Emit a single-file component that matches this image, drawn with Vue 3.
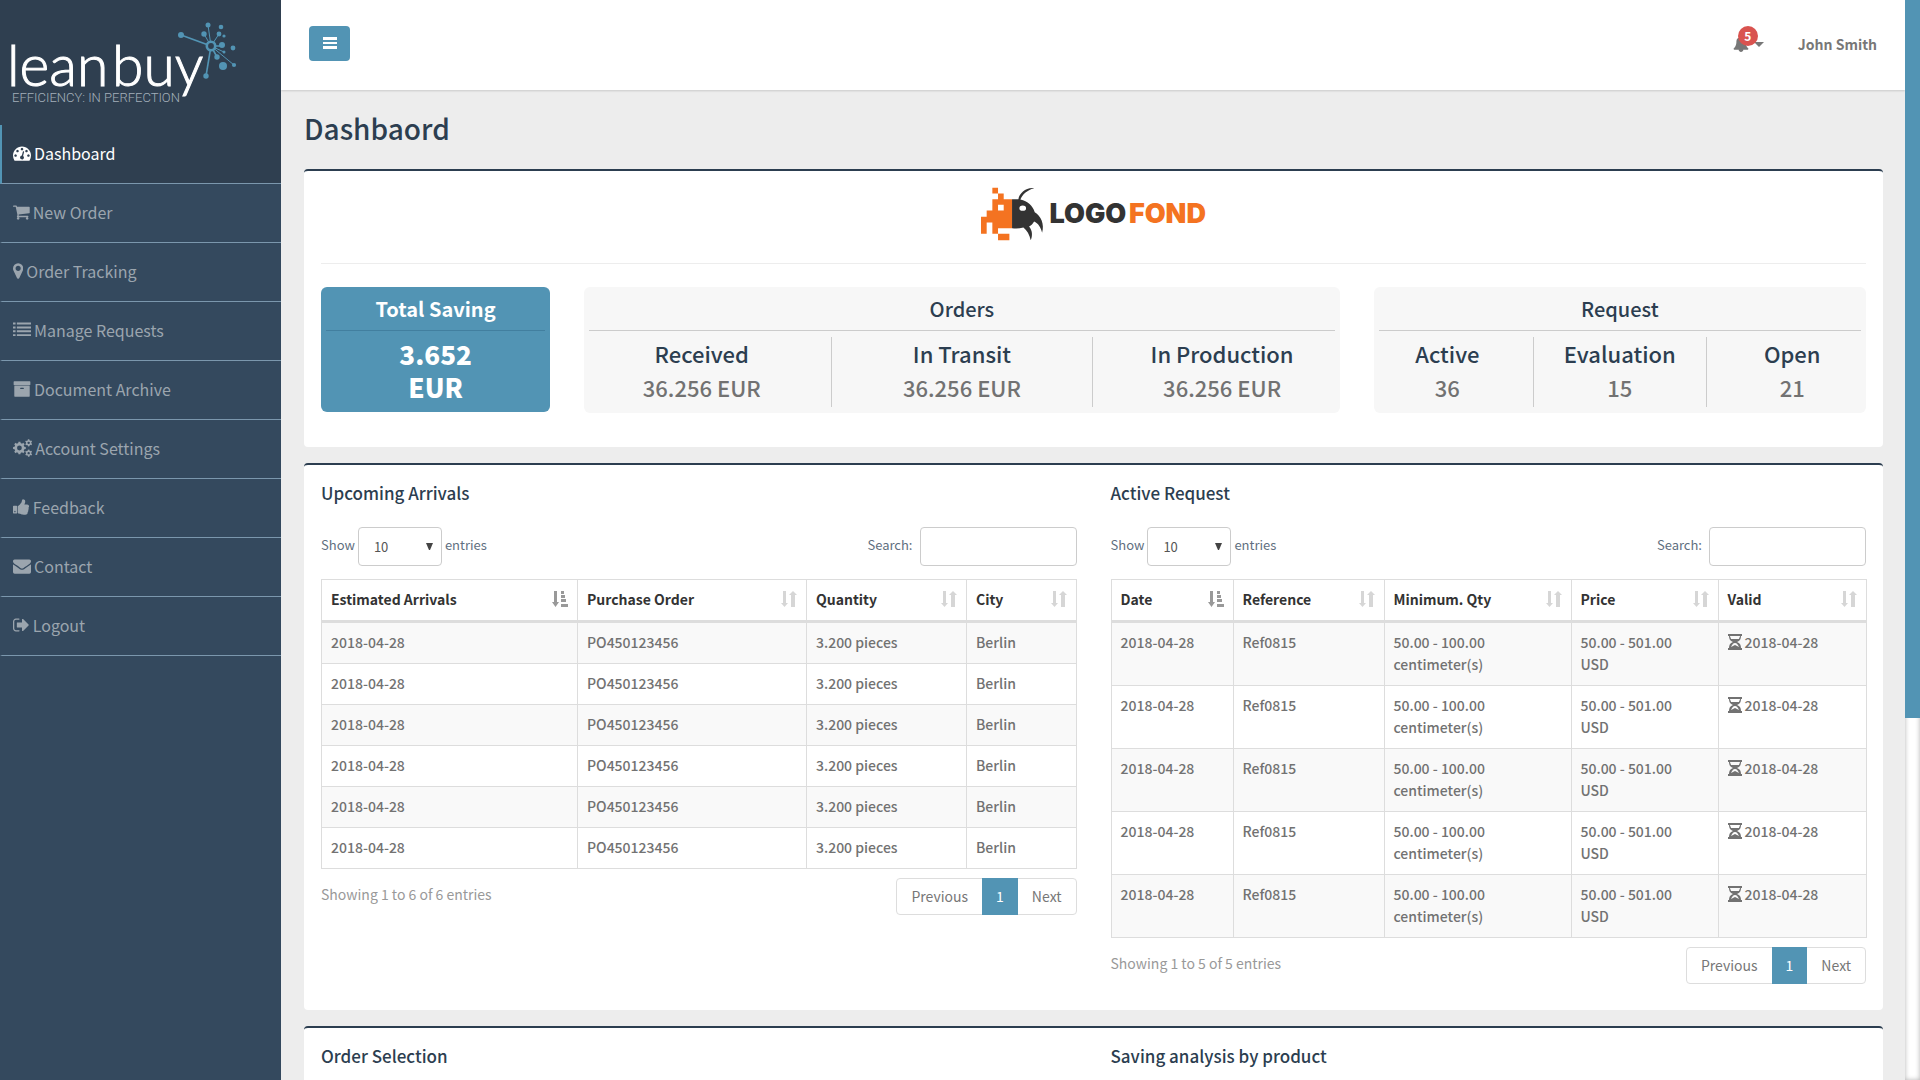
<script setup>
import { ref } from 'vue'

const P = {
  dashboard: 'M384 1152q0-53-37.5-90.5t-90.5-37.5-90.5 37.5-37.5 90.5 37.5 90.5 90.5 37.5 90.5-37.5 37.5-90.5zm192-448q0-53-37.5-90.5t-90.5-37.5-90.5 37.5-37.5 90.5 37.5 90.5 90.5 37.5 90.5-37.5 37.5-90.5zm428 481l101-382q6-26-7.5-48.5t-38.5-29.5-48 6.5-30 39.5l-101 382q-60 5-107 43.5t-63 98.5q-20 77 20 146t117 89 146-20 89-117q16-60-6-117t-72-91zm660-33q0-53-37.5-90.5t-90.5-37.5-90.5 37.5-37.5 90.5 37.5 90.5 90.5 37.5 90.5-37.5 37.5-90.5zm-640-640q0-53-37.5-90.5t-90.5-37.5-90.5 37.5-37.5 90.5 37.5 90.5 90.5 37.5 90.5-37.5 37.5-90.5zm448 192q0-53-37.5-90.5t-90.5-37.5-90.5 37.5-37.5 90.5 37.5 90.5 90.5 37.5 90.5-37.5 37.5-90.5zm320 448q0 261-141 483-19 29-54 29h-1402q-35 0-54-29-141-221-141-483 0-182 71-348t191-286 286-191 348-71 348 71 286 191 191 286 71 348z',
  cart: 'M704 1536q0 52-38 90t-90 38-90-38-38-90 38-90 90-38 90 38 38 90zm896 0q0 52-38 90t-90 38-90-38-38-90 38-90 90-38 90 38 38 90zm128-1088v512q0 24-16.5 42.5t-40.5 21.5l-1044 122q13 60 13 70 0 16-24 64h920q26 0 45 19t19 45-19 45-45 19h-1024q-26 0-45-19t-19-45q0-11 8-31.5t16-36 21.5-40 15.5-29.5l-177-823h-204q-26 0-45-19t-19-45 19-45 45-19h256q16 0 28.5 6.5t19.5 15.5 13 24.5 8 26 5.5 29.5 4.5 26h1201q26 0 45 19t19 45z',
  marker: 'M1152 640q0-106-75-181t-181-75-181 75-75 181 75 181 181 75 181-75 75-181zm256 0q0 109-33 179l-364 774q-16 33-47.5 52t-67.5 19-67.5-19-46.5-52l-365-774q-33-70-33-179 0-212 150-362t362-150 362 150 150 362z',
  list: 'M0 1312h256v192H0zM384 1312h1408v192H384zM0 928h256v192H0zM384 928h1408v192H384zM0 544h256v192H0zM384 544h1408v192H384zM0 160h256v192H0zM384 160h1408v192H384z',
  archive: 'M1088 832q0-26-19-45t-45-19h-256q-26 0-45 19t-19 45 19 45 45 19h256q26 0 45-19t19-45zm576-192v960q0 26-19 45t-45 19h-1408q-26 0-45-19t-19-45v-960q0-26 19-45t45-19h1408q26 0 45 19t19 45zm64-448v256q0 26-19 45t-45 19h-1536q-26 0-45-19t-19-45v-256q0-26 19-45t45-19h1536q26 0 45 19t19 45z',
  thumb: 'M320 1344q0-26-19-45t-45-19q-27 0-45.5 19t-18.5 45q0 27 18.5 45.5t45.5 18.5q26 0 45-18.5t19-45.5zm160-512v640q0 26-19 45t-45 19h-288q-26 0-45-19t-19-45v-640q0-26 19-45t45-19h288q26 0 45 19t19 45zm1184 0q0 86-55 149 15 44 15 76 3 76-43 137 17 56 0 117-15 57-54 94 9 112-49 181-64 76-197 78h-129q-66 0-144-15.5t-121.5-29-120.5-39.5q-123-43-158-44-26-1-45-19.5t-19-44.5v-641q0-25 18-43.5t43-20.5q24-2 76-59t101-121q68-87 101-120 18-18 31-48t17.5-48.5 13.5-60.5q7-39 12.5-61t19.5-52 34-50q19-19 45-19 46 0 82.5 10.5t60 26 40 40.5 24 45 12 50 5 45 .5 39q0 38-9.5 76t-19 60-27.5 56q-3 6-10 18t-11 22-8 24h277q78 0 135 57t57 135z',
  envelope: 'M1792 710v794q0 66-47 113t-113 47h-1472q-66 0-113-47t-47-113v-794q44 49 101 87 362 246 497 345 57 42 92.5 65.5t94.5 48 110 24.5h2q51 0 110-24.5t94.5-48 92.5-65.5q170-123 498-345 57-39 100-87zm0-294q0 79-49 151t-122 123q-376 261-468 325-10 7-42.5 31t-54 38.5-52 32.5-57.5 27-50 9h-2q-23 0-50-9t-57.5-27-52-32.5-54-38.5-42.5-31q-91-64-262-182.5t-205-142.5q-62-42-117-115.5t-55-136.5q0-78 41.5-130t118.5-52h1472q65 0 112.5 47t47.5 113z',
  signout: 'M704 1440q0 4 1 20t.5 26.5-3 23.5-10 19.5-20.5 6.5h-320q-119 0-203.5-84.5t-84.5-203.5v-704q0-119 84.5-203.5t203.5-84.5h320q13 0 22.5 9.5t9.5 22.5q0 4 1 20t.5 26.5-3 23.5-10 19.5-20.5 6.5h-320q-66 0-113 47t-47 113v704q0 66 47 113t113 47h312l11.5 1 11.5 3 8 5.5 7 9 2 13.5zm928-544q0 26-19 45l-544 544q-19 19-45 19t-45-19-19-45v-288h-448q-26 0-45-19t-19-45v-384q0-26 19-45t45-19h448v-288q0-26 19-45t45-19 45 19l544 544q19 19 19 45z',
  bell: 'M1728 1408q0 52-38 90t-90 38h-448q0 106-75 181t-181 75-181-75-75-181h-448q-52 0-90-38t-38-90q50-42 91-88t85-119.5 74.5-158.5 50-206 19.5-260q0-152 117-282.5t307-158.5q-8-19-8-39 0-40 28-68t68-28 68 28 28 68q0 20-8 39 190 28 307 158.5t117 282.5q0 139 19.5 260t50 206 74.5 158.5 85 119.5 91 88z'
}

// Toothed wheel outline with a round hole, for the settings icon.
function gear(cx, cy, outer, inner, hole, teeth, turn) {
  const step = (Math.PI * 2) / teeth
  const at = (r, a) => `${Math.round(cx + r * Math.cos(a))} ${Math.round(cy + r * Math.sin(a))}`
  let d = ''
  for (let i = 0; i < teeth; i++) {
    const a = turn + i * step
    d += (i ? 'L' : 'M') + at(inner, a - step * 0.3) + 'L' + at(outer, a - step * 0.2)
    d += 'L' + at(outer, a + step * 0.2) + 'L' + at(inner, a + step * 0.3)
  }
  return `${d}zM${cx - hole} ${cy}a${hole} ${hole} 0 1 0 ${hole * 2} 0a${hole} ${hole} 0 1 0 ${-hole * 2} 0z`
}
P.cogs = gear(640, 896, 640, 500, 240, 8, 0) + gear(1560, 384, 360, 270, 120, 6, 0.5) + gear(1560, 1408, 360, 270, 120, 6, 0.5)

const menu = [
  { label: 'Dashboard', icon: P.dashboard, box: '0 0 1792 1792', active: true },
  { label: 'New Order', icon: P.cart, box: '64 0 1664 1792' },
  { label: 'Order Tracking', icon: P.marker, box: '384 0 1024 1792' },
  { label: 'Manage Requests', icon: P.list, box: '0 0 1792 1792' },
  { label: 'Document Archive', icon: P.archive, box: '0 0 1792 1792' },
  { label: 'Account Settings', icon: P.cogs, box: '0 0 1920 1792' },
  { label: 'Feedback', icon: P.thumb, box: '64 0 1664 1792' },
  { label: 'Contact', icon: P.envelope, box: '0 0 1792 1792' },
  { label: 'Logout', icon: P.signout, box: '64 0 1664 1792' }
]

const stats = [
  {
    title: 'Orders',
    items: [
      ['Received', '36.256 EUR'],
      ['In Transit', '36.256 EUR'],
      ['In Production', '36.256 EUR']
    ]
  },
  { title: 'Request', items: [['Active', '36'], ['Evaluation', '15'], ['Open', '21']] }
]

const repeat = (n, row) => Array.from({ length: n }, () => row)
const tables = [
  {
    id: 'arrivals',
    title: 'Upcoming Arrivals',
    heads: ['Estimated Arrivals', 'Purchase Order', 'Quantity', 'City'],
    rows: repeat(6, ['2018-04-28', 'PO450123456', '3.200 pieces', 'Berlin']),
    info: 'Showing 1 to 6 of 6 entries'
  },
  {
    id: 'requests',
    title: 'Active Request',
    heads: ['Date', 'Reference', 'Minimum. Qty', 'Price', 'Valid'],
    rows: repeat(5, ['2018-04-28', 'Ref0815', '50.00 - 100.00 centimeter(s)', '50.00 - 501.00 USD', '2018-04-28']),
    info: 'Showing 1 to 5 of 5 entries'
  }
]
const lengths = ref({ arrivals: '10', requests: '10' })
const search = ref({ arrivals: '', requests: '' })

const nodes = [
  [181, 35, 3], [208, 25, 2.5], [221, 27, 2.3], [204, 34, 2.7], [219, 34, 2.4], [224, 36, 1.6], [222, 45, 3],
  [233, 48, 2.4], [224, 52, 1.5], [217, 57, 2.7], [223, 66, 4], [234, 65, 2.1], [206, 76, 2.7]
]
</script>

<template>
  <div class="shell">
    <aside class="sidebar">
      <a href="#" class="brand" aria-label="lean buy">
        <svg class="brand-art" viewBox="0 0 281 125">
          <g class="brand-word">
            <text x="7" y="86">lean</text>
            <text x="112" y="86">buy</text>
          </g>
          <text x="12" y="102" class="brand-tag">EFFICIENCY: IN PERFECTION</text>
          <g stroke="#5294b4" stroke-width="1" fill="none">
            <path d="M181 35L211 46" stroke-width="1.8" />
            <path d="M208 25L211 46M204 34L211 46L219 34M211 46L234 65M211 46L224 52" />
            <path d="M211 46L206 76" stroke-width="1.6" />
            <path d="M211 46H222M211 46L217 57" stroke-width="1.6" />
          </g>
          <g fill="#5294b4">
            <circle v-for="(n, i) in nodes" :key="i" :cx="n[0]" :cy="n[1]" :r="n[2]" />
          </g>
          <circle cx="211" cy="46" r="4.2" fill="#2f3f50" stroke="#5294b4" stroke-width="2.6" />
        </svg>
      </a>
      <nav>
        <a v-for="m in menu" :key="m.label" href="#" class="nav-item" :class="{ active: m.active }">
          <svg class="nav-icon" :viewBox="m.box"><path :d="m.icon" fill="currentColor" fill-rule="evenodd" /></svg>
          <span>{{ m.label }}</span>
        </a>
      </nav>
    </aside>

    <div class="page">
      <header class="topbar">
        <button type="button" class="toggle" aria-label="Toggle menu">
          <svg viewBox="0 0 14 12" width="14" height="12"><path d="M0 0h14v3H0zM0 5h14v2H0zM0 9h14v3H0z" fill="#fff" /></svg>
        </button>
        <div class="user-tools">
          <button type="button" class="bell" aria-label="Notifications">
            <svg viewBox="0 0 1792 1792" width="16" height="16"><path :d="P.bell" fill="currentColor" /></svg>
            <svg class="caret" viewBox="0 0 10 5" width="10" height="5"><path d="M0 0h10L5 5z" fill="currentColor" /></svg>
            <span class="badge">5</span>
          </button>
          <a href="#" class="user">John Smith</a>
        </div>
      </header>

      <main class="content">
        <h1>Dashbaord</h1>

        <section class="panel summary">
          <div class="client">
            <svg class="client-logo" viewBox="65 50 674 165" role="img" aria-label="LOGOFOND">
              <path
                fill="#f47321"
                fill-rule="evenodd"
                d="M99 54h17v17h17v17h25v87h-42v17h-17v-34h-17v34h-17v-51h17v-19h17V88h17V71h-17zM116 105v17h17v-17zM116 192h34v19h-34z"
              />
              <path
                fill="#333"
                fill-rule="evenodd"
                d="M158 88h19C180 70 200 52 224 55C202 61 189 74 183 89C205 93 220 108 226 127C244 138 256 162 248 189C244 172 236 160 224 155C220 163 214 167 209 170C219 182 220 197 214 211C210 194 203 182 192 173C180 176 170 176 158 175zM180 115a10 8 0 1 0 20 0a10 8 0 1 0-20 0z"
              />
              <text x="270" y="160" fill="#333" class="client-word">LOGO</text>
              <text x="508" y="160" fill="#f47321" class="client-word">FOND</text>
            </svg>
          </div>
          <div class="stats">
            <div class="cell">
              <div class="stat saving">
                <h2>Total Saving</h2>
                <p>3.652<br />EUR</p>
              </div>
            </div>
            <div v-for="s in stats" :key="s.title" class="cell">
              <div class="stat">
                <h2>{{ s.title }}</h2>
                <dl class="figures">
                  <div v-for="f in s.items" :key="f[0]" class="figure">
                    <dt>{{ f[0] }}</dt>
                    <dd>{{ f[1] }}</dd>
                  </div>
                </dl>
              </div>
            </div>
          </div>
        </section>

        <section class="panel halves">
          <div v-for="t in tables" :key="t.id" class="cell">
            <h3>{{ t.title }}</h3>
            <div class="controls">
              <div class="control">
                <label :for="t.id + '-length'">Show</label>
                <span class="select-wrap">
                  <select :id="t.id + '-length'" v-model="lengths[t.id]">
                    <option>10</option>
                    <option>25</option>
                    <option>50</option>
                  </select>
                  <svg class="arrow" viewBox="0 0 7 7" width="7" height="7"><path d="M0 0h7L4 7H3z" fill="#444" /></svg>
                </span>
                <label :for="t.id + '-length'">entries</label>
              </div>
              <div class="control search">
                <label :for="t.id + '-search'">Search:</label>
                <input :id="t.id + '-search'" v-model="search[t.id]" type="search" />
              </div>
            </div>
            <table :class="t.id">
              <thead>
                <tr>
                  <th v-for="(h, i) in t.heads" :key="h" scope="col">
                    <div class="head">
                      <span>{{ h }}</span>
                      <svg v-if="i === 0" class="sort sorted" viewBox="0 0 16 16" width="16" height="16">
                        <path d="M2 0h3v11h2l-3.500 5L0 11h2zM9 0h3v3H9zM9 4h4v3H9zM9 8h5v3H9zM9 13h7v3H9z" fill="currentColor" />
                      </svg>
                      <svg v-else class="sort" viewBox="0 0 16 16" width="16" height="16">
                        <path d="M2 0h3v12h2l-3.500 4L0 12h2zM10 16h4V4h2l-4-4L8 4h2z" fill="currentColor" />
                      </svg>
                    </div>
                  </th>
                </tr>
              </thead>
              <tbody>
                <tr v-for="(r, ri) in t.rows" :key="ri">
                  <td v-for="(c, ci) in r" :key="ci">
                    <svg v-if="ci === 4" class="hourglass" viewBox="0 0 14 16" width="14" height="16">
                      <path
                        fill="currentColor"
                        fill-rule="evenodd"
                        d="M0 0h14v2h-1c0 3-1 5-4 6c3 1 4 3 4 6h1v2H0v-2h1c0-3 1-5 4-6c-3-1-4-3-4-6H0zM2 2c0 1 1 2 1 3h8c0-1 1-2 1-3zM7 9c-2 0-3 2-4 4l4-2l4 2c-1-2-2-4-4-4z"
                      />
                    </svg>{{ c }}
                  </td>
                </tr>
              </tbody>
            </table>
            <div class="table-foot">
              <span class="info">{{ t.info }}</span>
              <nav class="pager" aria-label="Pages">
                <button type="button">Previous</button>
                <button type="button" class="current">1</button>
                <button type="button">Next</button>
              </nav>
            </div>
          </div>
        </section>

        <section class="panel halves">
          <div class="cell"><h3>Order Selection</h3></div>
          <div class="cell"><h3>Saving analysis by product</h3></div>
        </section>
      </main>
    </div>
    <div class="scroll-track"><div class="scroll-thumb"></div></div>
  </div>
</template>

<style>
body {
  margin: 0;
  background: #ededed;
}
</style>

<style scoped>
.shell {
  --ui: 'Noto Sans CJK SC', 'Open Sans', sans-serif;
  --blue: #5294b4;
  --navy: #2f3f50;
  display: flex;
  height: 100vh;
  overflow: hidden;
  font-family: var(--ui);
  font-size: 14px;
  line-height: 22px;
  color: #727272;
}
.shell * {
  box-sizing: border-box;
}
a {
  text-decoration: none;
  color: inherit;
}
button,
input,
select {
  font: inherit;
  color: inherit;
  margin: 0;
}
h1,
h2,
h3,
p,
dl,
dd {
  margin: 0;
}
h1,
h2,
h3,
dt {
  color: #2c3e50;
  font-weight: 500;
}

.sidebar {
  flex: 0 0 281px;
  background: #34495e;
}
.brand {
  display: block;
  background: var(--navy);
}
.brand-art {
  display: block;
  width: 100%;
}
.brand-word {
  font-family: Lato, sans-serif;
  font-weight: 300;
  font-size: 57px;
  fill: #fff;
  stroke: #fff;
  stroke-width: 1px;
}
.brand-tag {
  font-family: Roboto, sans-serif;
  font-weight: 300;
  font-size: 13px;
  fill: #a3afba;
}
.nav-item {
  display: flex;
  align-items: center;
  gap: 3px;
  height: 59px;
  padding: 0 0 2px 11px;
  border-left: 2px solid transparent;
  border-bottom: 1px solid #7b97ad;
  color: #9ba5ae;
  font-size: 16px;
}
.nav-item.active {
  background: var(--navy);
  border-left-color: var(--blue);
  color: #fff;
}
.nav-icon {
  height: 18px;
  width: auto;
}

.page {
  flex: 1;
  min-width: 0;
  overflow-y: auto;
  scrollbar-width: none;
  background: #ededed;
}
.topbar {
  display: flex;
  justify-content: space-between;
  align-items: flex-start;
  height: 90px;
  padding: 26px 28px 0;
  background: #fff;
  box-shadow: 0 1px 2px rgba(0, 0, 0, 0.15);
}
.toggle {
  display: flex;
  align-items: center;
  justify-content: center;
  width: 41px;
  height: 35px;
  padding: 0 0 1px;
  border: 0;
  border-radius: 4px;
  background: var(--blue);
}
.user-tools {
  display: flex;
  gap: 34px;
}
.bell {
  position: relative;
  display: flex;
  align-items: center;
  gap: 5px;
  height: 36px;
  padding: 0;
  border: 0;
  background: none;
  color: #777;
}
.badge {
  position: absolute;
  left: 5px;
  top: 0;
  width: 20px;
  height: 20px;
  border-radius: 50%;
  background: #d9534f;
  color: #fff;
  font-size: 12px;
  font-weight: 700;
  line-height: 20px;
}
.user {
  font-weight: 700;
  line-height: 36px;
  color: #777;
}

.content {
  padding: 22px 22px 0 23px;
}
h1 {
  font-size: 28px;
  line-height: 32px;
  padding-bottom: 25px;
}
.panel {
  border-top: 2px solid #2c3e50;
  border-radius: 4px;
  background: #fff;
  margin-bottom: 16px;
}
.cell {
  padding: 0 17px;
  min-width: 0;
}

.client {
  margin: 0 17px 23px;
  padding: 15px 0 21px;
  border-bottom: 1px solid #ededed;
  text-align: center;
}
.client-logo {
  display: block;
  width: 225px;
  height: 56px;
  margin: 0 auto;
}
.client-word {
  font-family: Inter, sans-serif;
  font-weight: 900;
  font-size: 81px;
}
.summary {
  padding-bottom: 34px;
}
.stats {
  display: grid;
  grid-template-columns: 2fr 6fr 4fr;
}
.stat {
  height: 126px;
  padding: 0 5px;
  border-radius: 6px;
  background: #f7f7f7;
  text-align: center;
}
.stat h2 {
  height: 44px;
  border-bottom: 1px solid #ccc;
  font-size: 20px;
  line-height: 43px;
}
.saving {
  height: 125px;
  background: var(--blue);
  color: #fff;
}
.saving h2 {
  color: #fff;
  font-weight: 700;
  border-color: #427f9f;
}
.saving p {
  padding-top: 6px;
  font-size: 26px;
  font-weight: 900;
  line-height: 33px;
}
.figures {
  display: flex;
  margin: 0 -17px;
  padding-top: 6px;
}
.figure {
  flex: 1 1 0;
  height: 70px;
  border-right: 1px solid #ccc;
  font-size: 22px;
  line-height: 36px;
  font-weight: 500;
}
.figure dt {
  line-height: 32px;
}
.figure:last-child {
  border-right: 0;
}

.halves {
  display: grid;
  grid-template-columns: 1fr 1fr;
  min-height: 80px;
}
h3 {
  font-size: 17px;
  line-height: 28px;
  padding: 14px 0 20px;
}
.controls {
  display: flex;
  justify-content: space-between;
  margin-bottom: 13px;
  color: #5f6f7f;
  font-size: 13px;
}
.control {
  display: flex;
  align-items: center;
  gap: 3px;
}
.control label {
  padding-bottom: 4px;
}
.search {
  gap: 7px;
}
.select-wrap {
  position: relative;
  display: block;
}
select,
input {
  display: block;
  height: 39px;
  border: 1px solid #ccc;
  border-radius: 4px;
  background: #fff;
  appearance: none;
}
select {
  width: 84px;
  padding: 0 15px;
  color: #555;
}
.arrow {
  position: absolute;
  right: 9px;
  top: 16px;
  pointer-events: none;
}
input {
  width: 157px;
  padding: 0 12px;
}

table {
  width: 100%;
  table-layout: fixed;
  border-collapse: collapse;
}
th,
td {
  padding: 8px 9px 10px;
  border: 1px solid #ddd;
  text-align: left;
  vertical-align: top;
}
th {
  border-bottom-width: 3px;
  color: #333;
  font-weight: 700;
}
td {
  font-weight: 500;
}
tbody tr:nth-child(odd) {
  background: #f9f9f9;
}
.arrivals th:nth-child(1) { width: 256px; }
.arrivals th:nth-child(2) { width: 229px; }
.arrivals th:nth-child(3) { width: 160px; }
.arrivals th:nth-child(4) { width: 110px; }
.requests th:nth-child(1) { width: 122px; }
.requests th:nth-child(2) { width: 151px; }
.requests th:nth-child(3) { width: 187px; }
.requests th:nth-child(4) { width: 147px; }
.requests th:nth-child(5) { width: 148px; }
.head {
  display: flex;
  justify-content: space-between;
  align-items: center;
}
.sort {
  color: #d6d6d6;
}
.sorted {
  color: #999;
}
.requests td:nth-child(3),
.requests td:nth-child(4) {
  padding-right: 32px;
}
.hourglass {
  margin-right: 3px;
  vertical-align: -2px;
}

.table-foot {
  display: flex;
  justify-content: space-between;
  align-items: flex-start;
  padding: 9px 0 26px;
}
.info {
  color: #999;
  line-height: 32px;
}
.pager {
  display: flex;
  height: 37px;
  border: 1px solid #ddd;
  border-radius: 4px;
}
.pager button {
  padding: 0 14px 2px;
  border: 0;
  background: none;
  color: #777;
}
.pager .current {
  margin: -1px 0;
  background: var(--blue);
  color: #fff;
}

.scroll-track {
  flex: 0 0 15px;
  background: #fff;
  box-shadow: inset 0 0 5px rgba(0, 0, 0, 0.3);
}
.scroll-thumb {
  height: 66.5%;
  background: var(--blue);
}
</style>
